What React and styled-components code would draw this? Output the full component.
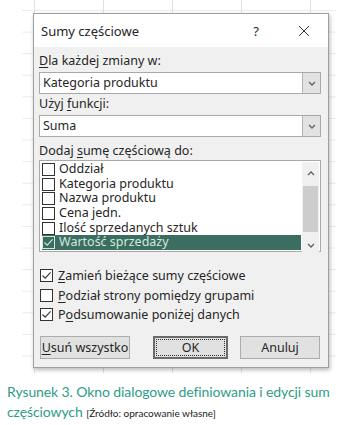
import React from 'react';
import styled, { createGlobalStyle } from 'styled-components';

const Global = createGlobalStyle`
  html, body { margin: 0; padding: 0; background: #fff; }
  body { width: 344px; height: 425px; overflow: hidden; }
`;

const Page = styled.div`
  width: 344px;
  height: 425px;
  background: #fff;
`;

const Sheet = styled.div`
  margin-left: 22px;
  width: 314px;
  height: 373px;
  box-sizing: border-box;
  padding: 13px 0 0 11px;
  background-color: #fff;
  background-image:
    linear-gradient(to right, #e0e0e0 1px, transparent 1px),
    linear-gradient(to bottom, #ececec 1px, transparent 1px);
  background-size: 69px 21.6px;
  background-position: 12px 10px;
`;

const Dialog = styled.div`
  width: 296px;
  height: 355px;
  box-sizing: border-box;
  border: 1px solid #a0a0a0;
  background: #f0f0f0;
  box-shadow: 1px 2px 4px rgba(0, 0, 0, 0.28);
  font-family: "Noto Sans", "Open Sans", sans-serif;
  font-size: 12.5px;
  color: #262626;
  display: flex;
  flex-direction: column;
`;

const TitleBar = styled.div`
  height: 33px;
  background: #fff;
  display: flex;
  align-items: center;
  padding-left: 7px;
  font-size: 13px;
`;

const Title = styled.div`
  flex: 1;
`;

const Help = styled.div`
  width: 20px;
  text-align: center;
  font-size: 13px;
  margin-right: 32px;
`;

const Close = styled.div`
  width: 12px;
  height: 12px;
  margin-right: 18px;
  display: flex;
`;

const Body = styled.div`
  flex: 1;
  display: flex;
  flex-direction: column;
  padding: 6px 7px 0 5px;
`;

const Label = styled.div`
  height: 16px;
  line-height: 16px;
  margin-top: ${(p) => p.$mt || 0}px;
  margin-bottom: ${(p) => p.$mb || 0}px;
`;

const Key = styled.span`
  text-decoration: underline;
  text-underline-offset: 2px;
`;

const Combo = styled.div`
  height: 22px;
  box-sizing: border-box;
  border: 1px solid #a9a9a9;
  background: #fff;
  display: flex;
  align-items: stretch;
`;

const ComboText = styled.div`
  flex: 1;
  padding-left: 3px;
  line-height: 20px;
`;

const ComboButton = styled.div`
  width: 17px;
  background: #e2e2e2;
  border-left: 1px solid #b4b4b4;
  display: flex;
  align-items: center;
  justify-content: center;
`;

const ListBox = styled.div`
  height: 92px;
  box-sizing: border-box;
  border: 1px solid #a9a9a9;
  background: #fff;
  display: grid;
  grid-template-columns: 1fr 17px;
  column-gap: 1px;
  padding: 1px 1px 0 2px;
`;

const Rows = styled.div`
  display: flex;
  flex-direction: column;
`;

const Row = styled.div`
  height: 14.7px;
  line-height: 14.7px;
  display: flex;
  align-items: center;
  gap: 4px;
  background: ${(p) => (p.$sel ? '#3b6d60' : 'transparent')};
  color: ${(p) => (p.$sel ? '#cfe9df' : 'inherit')};
  white-space: nowrap;
`;

const Box = styled.div`
  width: 13px;
  height: 13px;
  box-sizing: border-box;
  border: 1px solid ${(p) => p.$c || '#333'};
  background: ${(p) => p.$bg || '#fff'};
  display: flex;
  align-items: center;
  justify-content: center;
  flex: none;
`;

const ScrollBar = styled.div`
  background: #f0f0f0;
  display: flex;
  flex-direction: column;
  align-items: stretch;
`;

const ScrollArrow = styled.div`
  height: 22px;
  display: flex;
  align-items: center;
  justify-content: center;
`;

const Thumb = styled.div`
  height: 46px;
  margin: 2px 1px;
  background: #cdcdcd;
`;

const Spacer = styled.div`
  flex: 1;
`;

const Options = styled.div`
  margin-top: 14px;
  display: flex;
  flex-direction: column;
`;

const Option = styled.div`
  height: 19.5px;
  display: flex;
  align-items: center;
  gap: 5px;
  padding-left: 1px;
  white-space: nowrap;
`;

const Buttons = styled.div`
  margin-top: 11px;
  display: flex;
  padding-left: 1px;
`;

const Button = styled.div`
  width: ${(p) => p.$w}px;
  margin-left: ${(p) => p.$ml || 0}px;
  height: 23px;
  box-sizing: border-box;
  border: ${(p) => (p.$def ? '2px solid #6b6b6b' : '1px solid #adadad')};
  background: #e1e1e1;
  display: flex;
  align-items: center;
  justify-content: center;
  position: relative;
  white-space: nowrap;
`;

const Focus = styled.div`
  position: absolute;
  inset: 1px;
  border: 1px dotted #333;
  pointer-events: none;
`;

const Caption = styled.div`
  padding: 9px 2px 0 7px;
  font-family: Lato, "Noto Sans", sans-serif;
  font-size: 14px;
  letter-spacing: -0.1px;
  line-height: 20px;
  color: #2e9c86;
`;

const Source = styled.span`
  font-size: 10px;
  line-height: 14px;
  letter-spacing: 0;
  color: #222;
`;

const Check = ({ color = '#333' }) => (
  <svg width="11" height="11" viewBox="0 0 11 11">
    <path d="M1.5 5.5 L4.2 8.2 L9.6 2.3" fill="none" stroke={color} strokeWidth="1.1" />
  </svg>
);

const Chevron = ({ up }) => (
  <svg width="8" height="5" viewBox="0 0 8 5">
    <path d={up ? 'M1 4 L4 1 L7 4' : 'M1 1 L4 4 L7 1'} fill="none" stroke="#606060" strokeWidth="1.3" />
  </svg>
);

const items = [
  'Oddział',
  'Kategoria produktu',
  'Nazwa produktu',
  'Cena jedn.',
  'Ilość sprzedanych sztuk',
  'Wartość sprzedaży',
];

export default function App() {
  return (
    <Page>
      <Global />
      <Sheet>
        <Dialog>
          <TitleBar>
            <Title>Sumy częściowe</Title>
            <Help>?</Help>
            <Close>
              <svg width="12" height="12" viewBox="0 0 12 12">
                <path d="M1 1 L11 11 M11 1 L1 11" stroke="#333" strokeWidth="1" fill="none" />
              </svg>
            </Close>
          </TitleBar>
          <Body>
            <Label $mb={3}>
              <Key>D</Key>la każdej zmiany w:
            </Label>
            <Combo>
              <ComboText>Kategoria produktu</ComboText>
              <ComboButton>
                <Chevron />
              </ComboButton>
            </Combo>
            <Label $mt={2} $mb={3}>
              Użyj <Key>f</Key>unkcji:
            </Label>
            <Combo>
              <ComboText>Suma</ComboText>
              <ComboButton>
                <Chevron />
              </ComboButton>
            </Combo>
            <Label $mt={6} $mb={1}>
              Dodaj <Key>s</Key>umę częściową do:
            </Label>
            <ListBox>
              <Rows>
                {items.map((it, i) => {
                  const sel = i === items.length - 1;
                  return (
                    <Row key={it} $sel={sel}>
                      <Box $c={sel ? '#cfe9df' : '#333'} $bg={sel ? '#3b6d60' : '#fff'}>
                        {sel && <Check color="#cfe9df" />}
                      </Box>
                      {it}
                    </Row>
                  );
                })}
              </Rows>
              <ScrollBar>
                <ScrollArrow>
                  <Chevron up />
                </ScrollArrow>
                <Thumb />
                <Spacer />
                <ScrollArrow>
                  <Chevron />
                </ScrollArrow>
              </ScrollBar>
            </ListBox>
            <Options>
              <Option>
                <Box>
                  <Check />
                </Box>
                <span>
                  <Key>Z</Key>amień bieżące sumy częściowe
                </span>
              </Option>
              <Option>
                <Box />
                <span>
                  <Key>P</Key>odział strony pomiędzy grupami
                </span>
              </Option>
              <Option>
                <Box>
                  <Check />
                </Box>
                <span>
                  P<Key>o</Key>dsumowanie poniżej danych
                </span>
              </Option>
            </Options>
            <Buttons>
              <Button $w={90}>
                <span>
                  <Key>U</Key>suń wszystko
                </span>
              </Button>
              <Button $w={75} $ml={23} $def>
                OK
                <Focus />
              </Button>
              <Button $w={80} $ml={12}>
                Anuluj
              </Button>
            </Buttons>
          </Body>
        </Dialog>
      </Sheet>
      <Caption>
        Rysunek 3. Okno dialogowe definiowania i edycji sum częściowych{' '}
        <Source>[Źródło: opracowanie własne]</Source>
      </Caption>
    </Page>
  );
}
